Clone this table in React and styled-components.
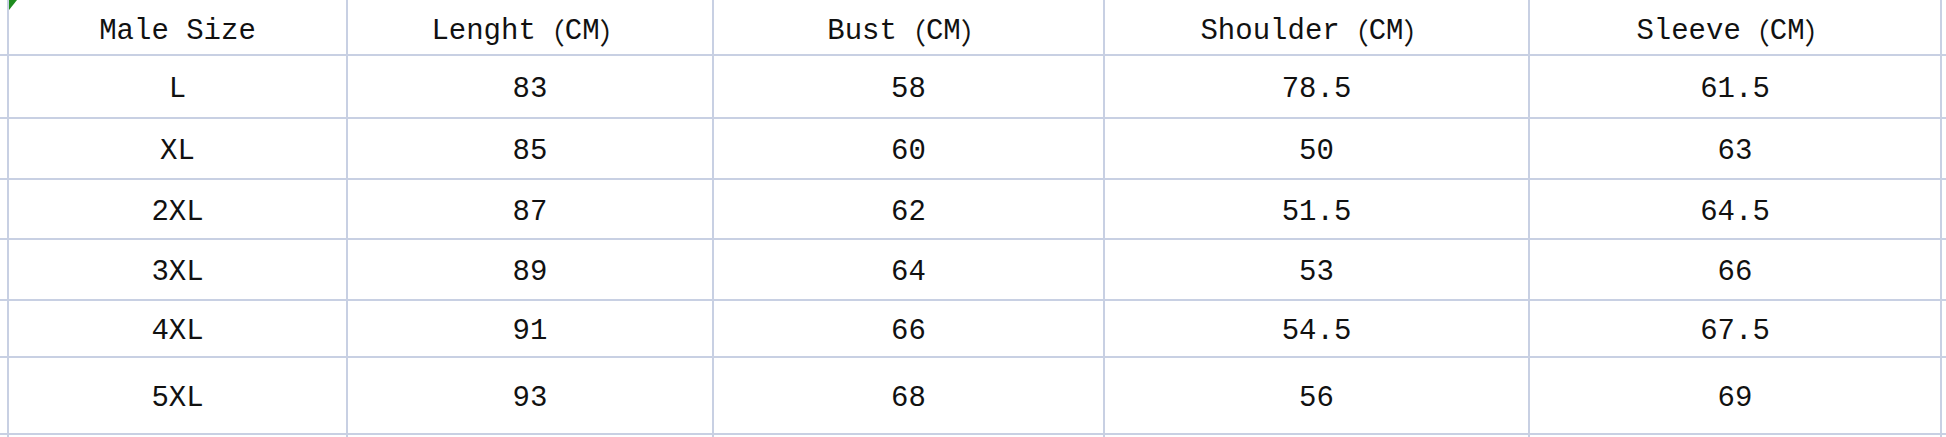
import React from 'react'
import styled, { createGlobalStyle } from 'styled-components'

const GlobalStyle = createGlobalStyle`
  html, body {
    margin: 0;
    padding: 0;
    background: #ffffff;
  }
`

const LINE = '#c8d0e3'

const Sheet = styled.div`
  width: 1946px;
  height: 437px;
  overflow: hidden;
  background: ${LINE};
  display: grid;
  grid-template-columns: 7px 337px 364px 389px 423px 410px 1fr;
  grid-template-rows: 54px 61px 59px 58px 59px 55px 75px 20px;
  gap: 2px;
  font-family: "Liberation Mono", "Noto Sans CJK SC", monospace;
  font-size: 29px;
  color: #111;
`

const Cell = styled.div`
  position: relative;
  background: #ffffff;
  display: flex;
  align-items: center;
  justify-content: center;
  padding-top: ${p => (p.$head ? '8px' : '6px')};
  white-space: nowrap;
  box-sizing: border-box;
`

const Marker = styled.span`
  position: absolute;
  left: 0;
  top: 0;
  width: 0;
  height: 0;
  border-top: 10px solid #1e8c1e;
  border-right: 8px solid transparent;
`

const Paren = styled.span`
  font-family: "Noto Sans CJK SC", sans-serif;
  display: inline-block;
  width: 1em;
  text-align: ${p => (p.$close ? 'left' : 'right')};
`

const unit = label => (
  <>
    {label}
    <Paren>（</Paren>CM<Paren $close>）</Paren>
  </>
)

const headers = ['Male Size', unit('Lenght'), unit('Bust'), unit('Shoulder'), unit('Sleeve')]

const rows = [
  ['L', '83', '58', '78.5', '61.5'],
  ['XL', '85', '60', '50', '63'],
  ['2XL', '87', '62', '51.5', '64.5'],
  ['3XL', '89', '64', '53', '66'],
  ['4XL', '91', '66', '54.5', '67.5'],
  ['5XL', '93', '68', '56', '69'],
]

export default function App() {
  return (
    <>
      <GlobalStyle />
      <Sheet>
        <Cell $head />
        {headers.map((h, i) => (
          <Cell key={i} $head>
            {i === 0 && <Marker />}
            {h}
          </Cell>
        ))}
        <Cell $head />
        {rows.map((r, ri) => (
          <React.Fragment key={ri}>
            <Cell />
            {r.map((v, ci) => (
              <Cell key={ci}>{v}</Cell>
            ))}
            <Cell />
          </React.Fragment>
        ))}
        {Array.from({ length: 7 }).map((_, i) => (
          <Cell key={'b' + i} />
        ))}
      </Sheet>
    </>
  )
}
